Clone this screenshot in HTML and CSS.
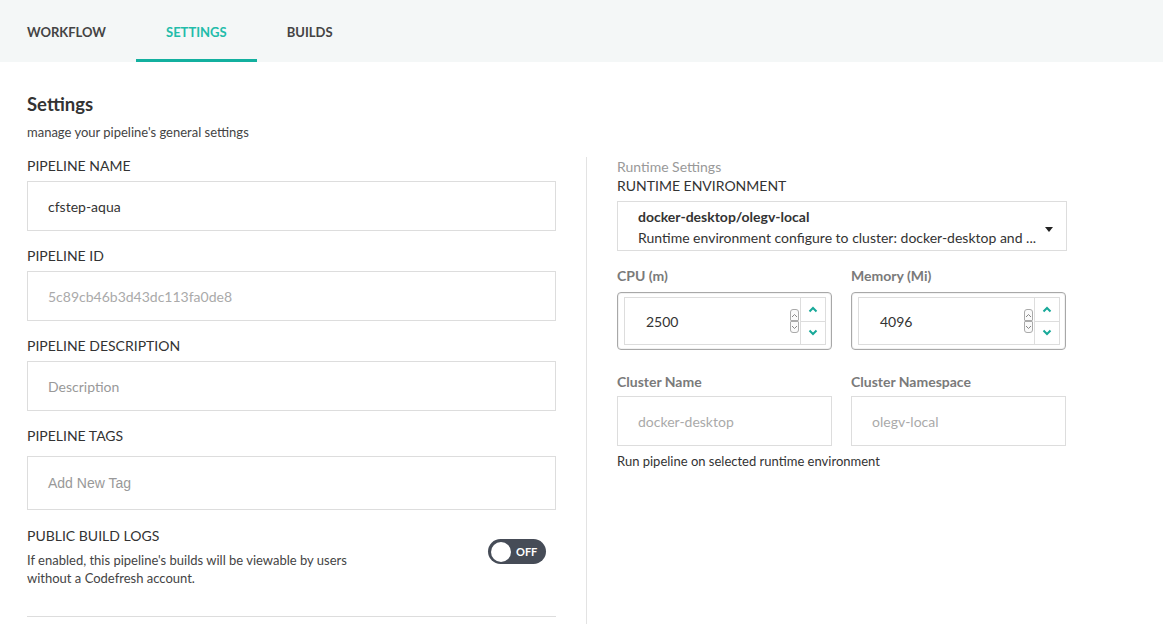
FILE: index.html
```html
<!DOCTYPE html>
<html lang="en">
<head>
<meta charset="utf-8">
<title>Pipeline Settings</title>
<link rel="stylesheet" href="styles.css">
</head>
<body>
<nav class="tabs">
  <a class="tab tab-first">WORKFLOW</a>
  <a class="tab tab-active">SETTINGS</a>
  <a class="tab">BUILDS</a>
</nav>
<main class="page">
  <h1 class="title">Settings</h1>
  <p class="subtitle">manage your pipeline's general settings</p>
  <div class="columns">
    <section class="left">
      <div class="field">
        <label class="label">PIPELINE NAME</label>
        <div class="input">cfstep-aqua</div>
      </div>
      <div class="field">
        <label class="label">PIPELINE ID</label>
        <div class="input input-muted">5c89cb46b3d43dc113fa0de8</div>
      </div>
      <div class="field">
        <label class="label">PIPELINE DESCRIPTION</label>
        <div class="input input-placeholder">Description</div>
      </div>
      <div class="field field-tags">
        <label class="label">PIPELINE TAGS</label>
        <div class="input input-tags">Add New Tag</div>
      </div>
      <div class="public-row">
        <div class="public-text">
          <div class="label">PUBLIC BUILD LOGS</div>
          <p class="public-desc">If enabled, this pipeline's builds will be viewable by users without a Codefresh account.</p>
        </div>
        <div class="toggle"><span class="knob"></span><span class="toggle-text">OFF</span></div>
      </div>
      <div class="hr"></div>
    </section>
    <div class="vsep"></div>
    <section class="right">
      <div class="section-caption">Runtime Settings</div>
      <div class="label label-re">RUNTIME ENVIRONMENT</div>
      <div class="select">
        <div class="select-text">
          <div class="select-title">docker-desktop/olegv-local</div>
          <div class="select-desc">Runtime environment configure to cluster: docker-desktop and ...</div>
        </div>
        <span class="caret"></span>
      </div>
      <div class="grid2 grid-res">
        <div>
          <div class="sublabel">CPU (m)</div>
          <div class="number">
            <div class="number-inner">
              <div class="number-value">2500</div>
              <div class="mini">
                <span class="mini-btn mini-up"><svg width="7" height="5" viewBox="0 0 7 5"><path d="M1 4 L3.5 1.5 L6 4" fill="none" stroke="#888" stroke-width="1"/></svg></span>
                <span class="mini-btn mini-down"><svg width="7" height="5" viewBox="0 0 7 5"><path d="M1 1 L3.5 3.5 L6 1" fill="none" stroke="#888" stroke-width="1"/></svg></span>
              </div>
              <div class="spin">
                <span class="spin-btn"><svg width="10" height="7" viewBox="0 0 10 7"><path d="M1.5 5.5 L5 2 L8.5 5.5" fill="none" stroke="#18a999" stroke-width="2"/></svg></span>
                <span class="spin-btn spin-down"><svg width="10" height="7" viewBox="0 0 10 7"><path d="M1.5 1.5 L5 5 L8.5 1.5" fill="none" stroke="#18a999" stroke-width="2"/></svg></span>
              </div>
            </div>
          </div>
        </div>
        <div>
          <div class="sublabel">Memory (Mi)</div>
          <div class="number">
            <div class="number-inner">
              <div class="number-value">4096</div>
              <div class="mini">
                <span class="mini-btn mini-up"><svg width="7" height="5" viewBox="0 0 7 5"><path d="M1 4 L3.5 1.5 L6 4" fill="none" stroke="#888" stroke-width="1"/></svg></span>
                <span class="mini-btn mini-down"><svg width="7" height="5" viewBox="0 0 7 5"><path d="M1 1 L3.5 3.5 L6 1" fill="none" stroke="#888" stroke-width="1"/></svg></span>
              </div>
              <div class="spin">
                <span class="spin-btn"><svg width="10" height="7" viewBox="0 0 10 7"><path d="M1.5 5.5 L5 2 L8.5 5.5" fill="none" stroke="#18a999" stroke-width="2"/></svg></span>
                <span class="spin-btn spin-down"><svg width="10" height="7" viewBox="0 0 10 7"><path d="M1.5 1.5 L5 5 L8.5 1.5" fill="none" stroke="#18a999" stroke-width="2"/></svg></span>
              </div>
            </div>
          </div>
        </div>
      </div>
      <div class="grid2 grid-cluster">
        <div>
          <div class="sublabel sublabel-cluster">Cluster Name</div>
          <div class="input input-muted">docker-desktop</div>
        </div>
        <div>
          <div class="sublabel sublabel-cluster">Cluster Namespace</div>
          <div class="input input-muted">olegv-local</div>
        </div>
      </div>
      <p class="note">Run pipeline on selected runtime environment</p>
    </section>
  </div>
</main>
</body>
</html>
```

FILE: styles.css
```css
* { box-sizing: border-box; }
html, body { margin: 0; padding: 0; overflow: hidden; }
body {
  font-family: "Lato", "Noto Sans", "Liberation Sans", sans-serif;
  color: #333;
  background: #fff;
  height: 625px;
}

.tabs {
  display: flex;
  height: 62px;
  background: #f4f7f7;
}
.tab {
  display: flex;
  align-items: center;
  padding: 4px 30px 0;
  border-bottom: 3px solid transparent;
  font-size: 13px;
  font-weight: 700;
  color: #444;
  text-decoration: none;
}
.tab-first { padding-left: 27px; }
.tab-active {
  color: #22bcaa;
  border-bottom-color: #13b09f;
}

.page { padding: 31px 0 0 27px; }
.title {
  margin: 0;
  font-size: 18.5px;
  line-height: 22px;
  font-weight: 700;
  color: #333;
}
.subtitle {
  margin: 9px 0 0;
  font-size: 13px;
  line-height: 16px;
  color: #444;
}

.columns {
  display: flex;
  align-items: stretch;
  margin-top: 18px;
}
.left { width: 529px; padding-bottom: 7px; }
.vsep {
  width: 1px;
  background: #e3e3e3;
  margin: -1px 30px 0;
}
.right { width: 450px; }

.label {
  display: block;
  font-size: 14px;
  line-height: 16px;
  color: #333;
  margin-bottom: 7px;
}
.field { margin-bottom: 17px; }
.field-tags { margin-bottom: 18px; }
.field-tags .label { margin-bottom: 12px; }

.input {
  height: 50px;
  border: 1px solid #ddd;
  display: flex;
  align-items: center;
  padding: 0 20px;
  font-size: 14px;
  color: #333;
}
.input-muted { color: #aaa; }
.input-placeholder { color: #999; }
.input-tags {
  height: 54px;
  color: #999;
  font-family: "Liberation Sans", Arial, sans-serif;
}

.public-row {
  display: flex;
  justify-content: space-between;
  align-items: flex-start;
}
.public-text { width: 330px; }
.public-desc {
  margin: 0;
  font-size: 13px;
  line-height: 18px;
  color: #444;
}
.toggle {
  margin: 11px 10px 0 0;
  width: 58px;
  height: 25px;
  border-radius: 13px;
  background: #464c57;
  display: flex;
  align-items: center;
  padding: 0 3px;
}
.knob {
  width: 20px;
  height: 20px;
  border-radius: 50%;
  background: #fff;
}
.toggle-text {
  margin-left: 5px;
  font-size: 11px;
  font-weight: 700;
  color: #fff;
}
.hr {
  height: 1px;
  background: #ddd;
  margin-top: 29px;
}

.section-caption {
  font-size: 14px;
  line-height: 16px;
  color: #999;
  margin-top: 1px;
}
.label-re { margin-top: 3px; }

.select {
  height: 50px;
  border: 1px solid #ddd;
  display: flex;
  padding: 4px 13px 0 20px;
}
.select-text { flex: 1; min-width: 0; }
.select-title {
  font-size: 14px;
  line-height: 21px;
  font-weight: 700;
  color: #333;
}
.select-desc {
  font-size: 14px;
  line-height: 21px;
  color: #333;
  white-space: nowrap;
  overflow: hidden;
  text-overflow: ellipsis;
}
.caret {
  align-self: center;
  margin: 2px 0 0 4px;
  width: 0;
  height: 0;
  border-left: 4.5px solid transparent;
  border-right: 4.5px solid transparent;
  border-top: 5px solid #222;
}

.grid2 {
  display: grid;
  grid-template-columns: 215px 215px;
  column-gap: 19px;
}
.grid-res { margin-top: 17px; }
.grid-cluster { margin-top: 24px; }
.sublabel {
  font-size: 14px;
  line-height: 16px;
  font-weight: 700;
  color: #7a7a7a;
  margin-bottom: 8px;
}
.sublabel-cluster { margin-bottom: 6px; }

.number {
  height: 58px;
  border: 1px solid #a8a8a8;
  border-radius: 4px;
  padding: 4px 5px 4px 6px;
  box-shadow: inset 0 0 0 1px #f2f2f2;
}
.number-inner {
  height: 100%;
  border: 1px solid #ddd;
  display: flex;
  align-items: center;
}
.number-value {
  flex: 1;
  padding-left: 21px;
  font-size: 14px;
  color: #333;
}
.mini {
  display: flex;
  flex-direction: column;
  margin-right: 1px;
}
.mini-btn {
  width: 9px;
  height: 12px;
  border: 1px solid #aaa;
  display: flex;
  align-items: center;
  justify-content: center;
  background: #fafafa;
}
.mini-up { border-radius: 3px 3px 1px 1px; }
.mini-down { border-radius: 1px 1px 3px 3px; }
.spin {
  width: 25px;
  height: 100%;
  border-left: 1px solid #ddd;
  display: flex;
  flex-direction: column;
}
.spin-btn {
  flex: 1;
  display: flex;
  align-items: center;
  justify-content: center;
}
.spin-down { border-top: 1px solid #ddd; }

.note {
  margin: 7px 0 0;
  font-size: 13px;
  line-height: 16px;
  color: #333;
}
```
